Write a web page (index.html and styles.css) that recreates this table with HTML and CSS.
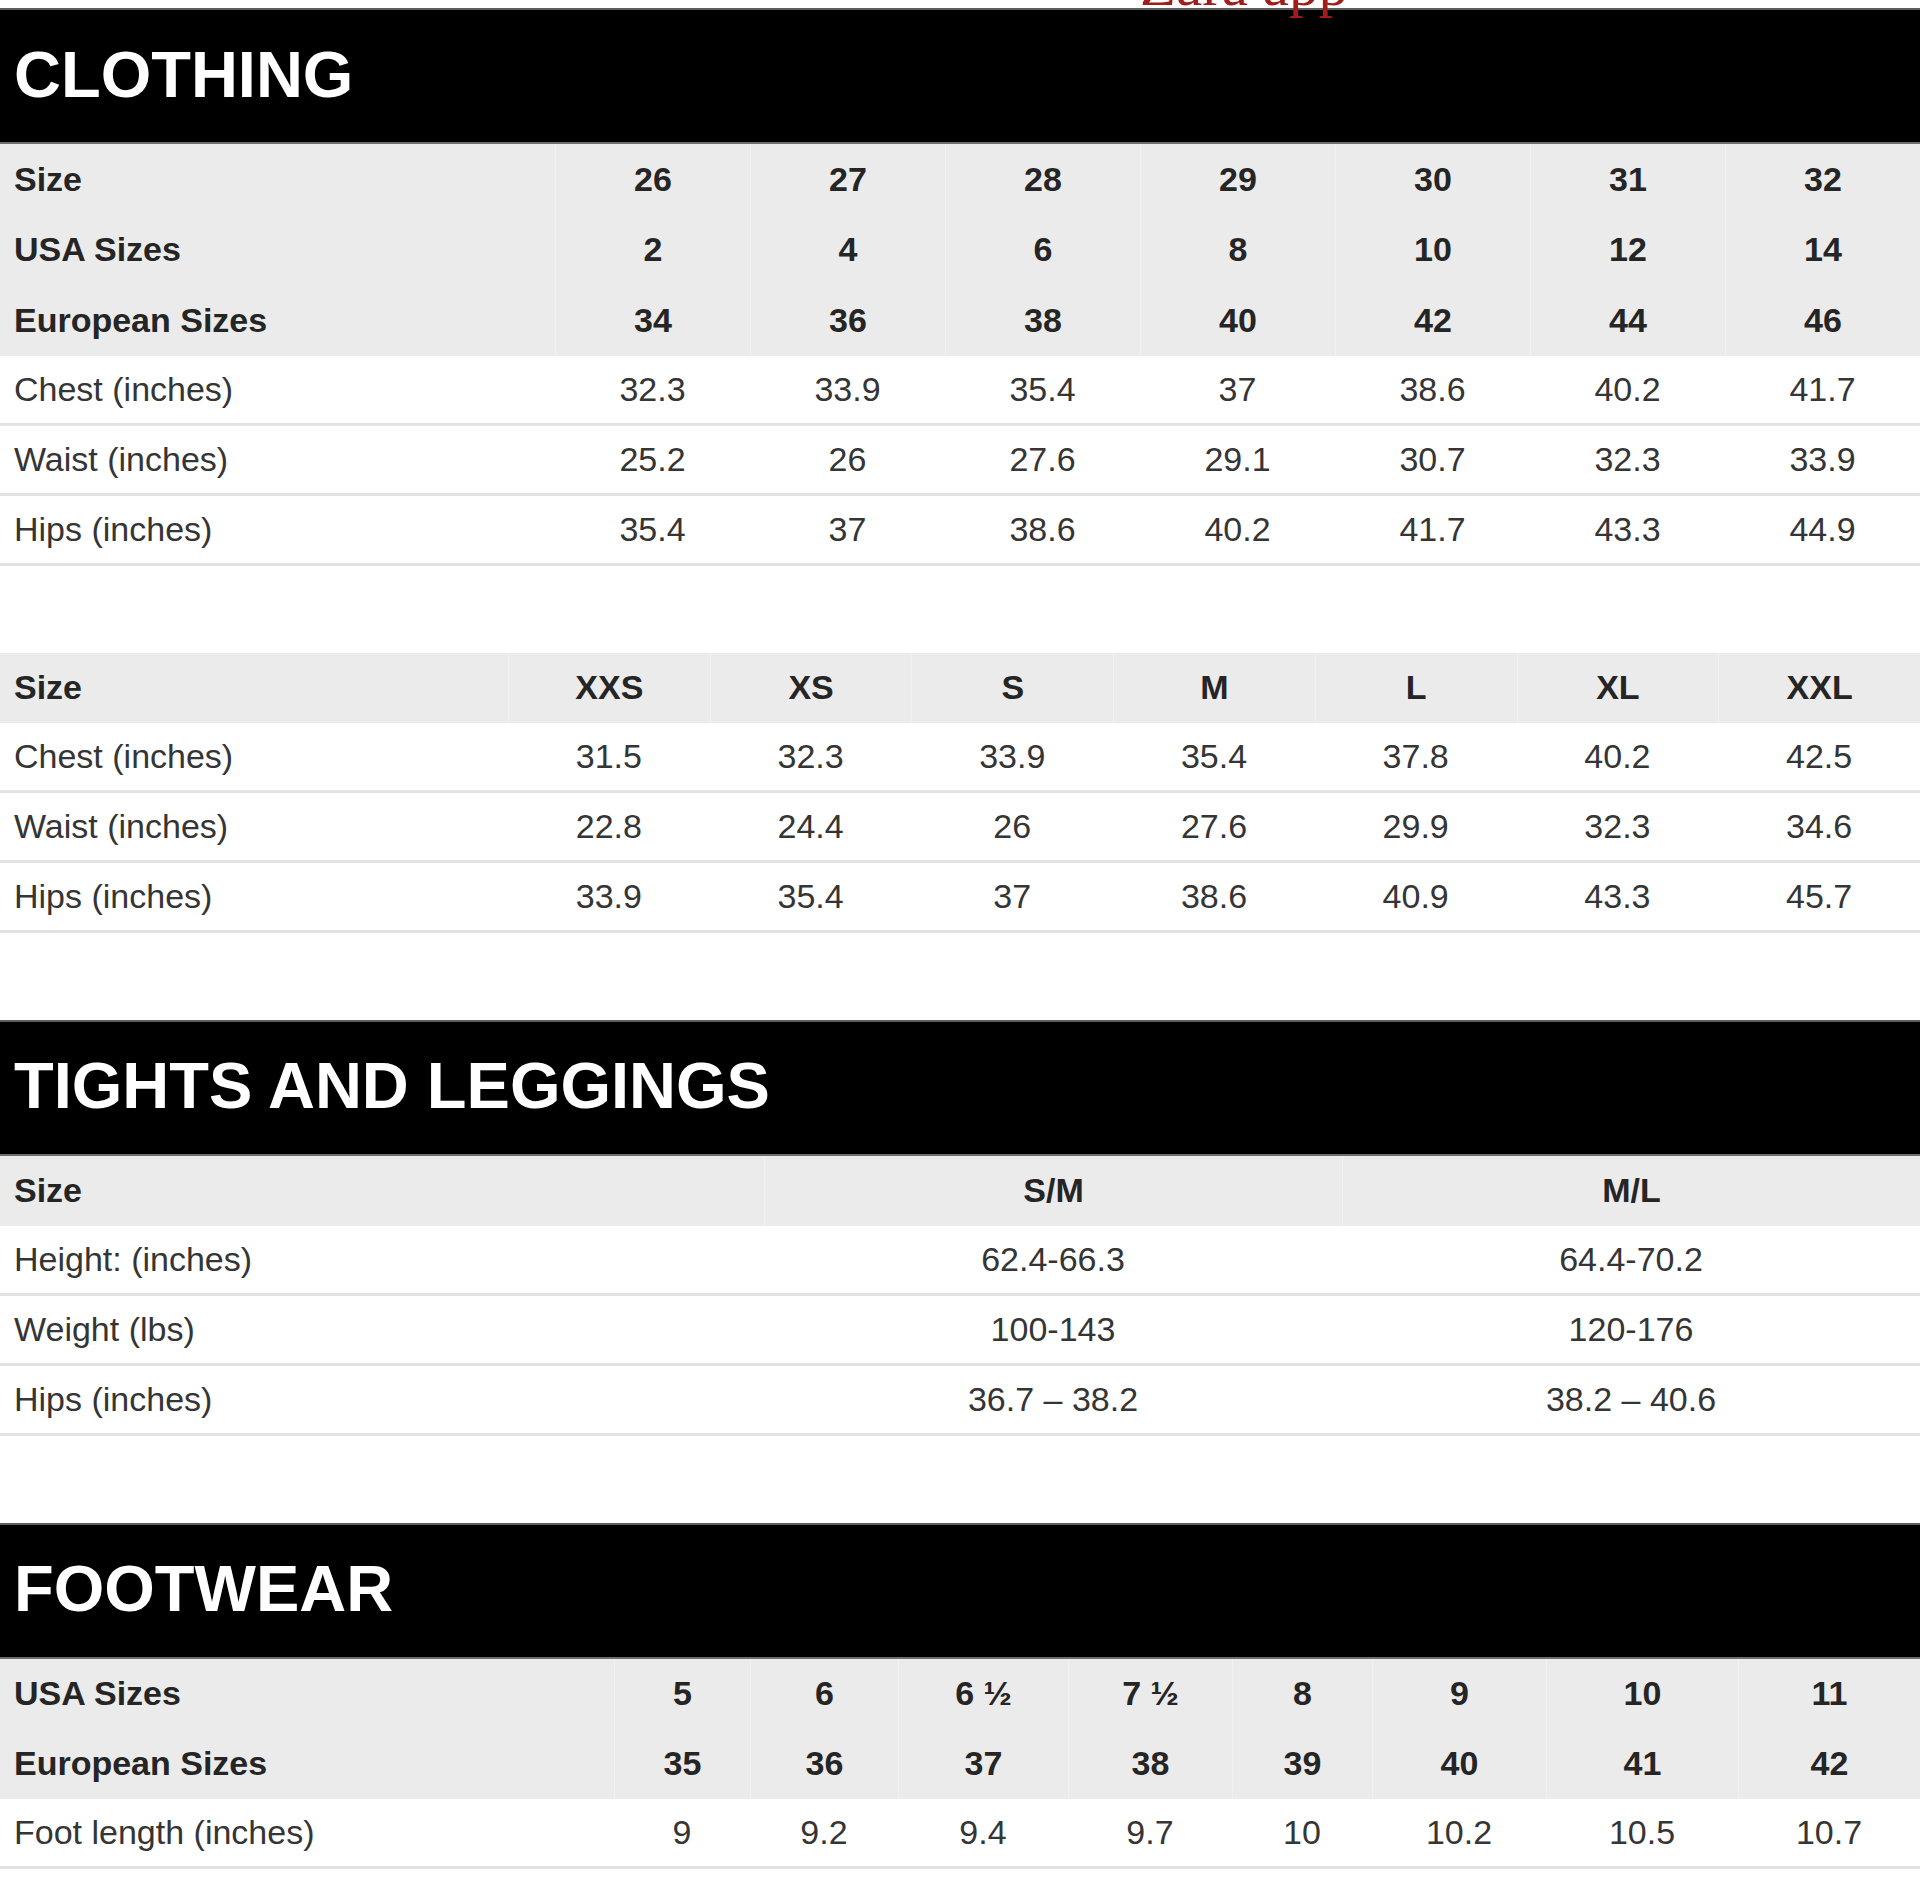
FILE: index.html
```html
<!DOCTYPE html>
<html lang="en">
<head>
<meta charset="utf-8">
<title>Size Guide</title>
<link rel="stylesheet" href="styles.css">
</head>
<body>
<div class="page">
  <div class="watermark">Zara app</div>

  <section class="chart">
    <h2 class="chart-title">CLOTHING</h2>
    <div class="table t-clothing">
      <div class="row head"><div class="cell label">Size</div><div class="cell">26</div><div class="cell">27</div><div class="cell">28</div><div class="cell">29</div><div class="cell">30</div><div class="cell">31</div><div class="cell">32</div></div>
      <div class="row head"><div class="cell label">USA Sizes</div><div class="cell">2</div><div class="cell">4</div><div class="cell">6</div><div class="cell">8</div><div class="cell">10</div><div class="cell">12</div><div class="cell">14</div></div>
      <div class="row head"><div class="cell label">European Sizes</div><div class="cell">34</div><div class="cell">36</div><div class="cell">38</div><div class="cell">40</div><div class="cell">42</div><div class="cell">44</div><div class="cell">46</div></div>
      <div class="row body"><div class="cell label">Chest (inches)</div><div class="cell">32.3</div><div class="cell">33.9</div><div class="cell">35.4</div><div class="cell">37</div><div class="cell">38.6</div><div class="cell">40.2</div><div class="cell">41.7</div></div>
      <div class="row body"><div class="cell label">Waist (inches)</div><div class="cell">25.2</div><div class="cell">26</div><div class="cell">27.6</div><div class="cell">29.1</div><div class="cell">30.7</div><div class="cell">32.3</div><div class="cell">33.9</div></div>
      <div class="row body"><div class="cell label">Hips (inches)</div><div class="cell">35.4</div><div class="cell">37</div><div class="cell">38.6</div><div class="cell">40.2</div><div class="cell">41.7</div><div class="cell">43.3</div><div class="cell">44.9</div></div>
    </div>
  </section>

  <section class="chart">
    <div class="table t-alpha">
      <div class="row head"><div class="cell label">Size</div><div class="cell">XXS</div><div class="cell">XS</div><div class="cell">S</div><div class="cell">M</div><div class="cell">L</div><div class="cell">XL</div><div class="cell">XXL</div></div>
      <div class="row body"><div class="cell label">Chest (inches)</div><div class="cell">31.5</div><div class="cell">32.3</div><div class="cell">33.9</div><div class="cell">35.4</div><div class="cell">37.8</div><div class="cell">40.2</div><div class="cell">42.5</div></div>
      <div class="row body"><div class="cell label">Waist (inches)</div><div class="cell">22.8</div><div class="cell">24.4</div><div class="cell">26</div><div class="cell">27.6</div><div class="cell">29.9</div><div class="cell">32.3</div><div class="cell">34.6</div></div>
      <div class="row body"><div class="cell label">Hips (inches)</div><div class="cell">33.9</div><div class="cell">35.4</div><div class="cell">37</div><div class="cell">38.6</div><div class="cell">40.9</div><div class="cell">43.3</div><div class="cell">45.7</div></div>
    </div>
  </section>

  <section class="chart">
    <h2 class="chart-title">TIGHTS AND LEGGINGS</h2>
    <div class="table t-tights">
      <div class="row head"><div class="cell label">Size</div><div class="cell">S/M</div><div class="cell">M/L</div></div>
      <div class="row body"><div class="cell label">Height: (inches)</div><div class="cell">62.4-66.3</div><div class="cell">64.4-70.2</div></div>
      <div class="row body"><div class="cell label">Weight (lbs)</div><div class="cell">100-143</div><div class="cell">120-176</div></div>
      <div class="row body"><div class="cell label">Hips (inches)</div><div class="cell">36.7 – 38.2</div><div class="cell">38.2 – 40.6</div></div>
    </div>
  </section>

  <section class="chart">
    <h2 class="chart-title">FOOTWEAR</h2>
    <div class="table t-shoes">
      <div class="row head"><div class="cell label">USA Sizes</div><div class="cell">5</div><div class="cell">6</div><div class="cell">6 ½</div><div class="cell">7 ½</div><div class="cell">8</div><div class="cell">9</div><div class="cell">10</div><div class="cell">11</div></div>
      <div class="row head"><div class="cell label">European Sizes</div><div class="cell">35</div><div class="cell">36</div><div class="cell">37</div><div class="cell">38</div><div class="cell">39</div><div class="cell">40</div><div class="cell">41</div><div class="cell">42</div></div>
      <div class="row body"><div class="cell label">Foot length (inches)</div><div class="cell">9</div><div class="cell">9.2</div><div class="cell">9.4</div><div class="cell">9.7</div><div class="cell">10</div><div class="cell">10.2</div><div class="cell">10.5</div><div class="cell">10.7</div></div>
    </div>
  </section>
</div>
</body>
</html>
```

FILE: styles.css
```css
* {
  box-sizing: border-box;
}

html,
body {
  margin: 0;
  padding: 0;
  background: #ffffff;
}

body {
  font-family: "Liberation Sans", Arial, Helvetica, sans-serif;
}

.page {
  position: relative;
  width: 1920px;
  padding-top: 8px;
  padding-bottom: 30px;
}

.watermark {
  position: absolute;
  left: 1140px;
  top: -44px;
  z-index: 2;
  font-family: "Liberation Serif", "Times New Roman", serif;
  font-size: 59px;
  line-height: 58px;
  color: #a21d19;
  white-space: nowrap;
}

.chart + .chart {
  margin-top: 87px;
}

.chart-title {
  margin: 0;
  height: 136px;
  display: flex;
  align-items: center;
  padding: 0 0 4px 14px;
  background: #000000;
  border-top: 2px solid #5e5e5e;
  border-bottom: 2px solid #6e6e6e;
  color: #ffffff;
  font-size: 65px;
  line-height: 65px;
  font-weight: 700;
  letter-spacing: 0;
}

.table {
  display: flex;
  flex-direction: column;
}

.row {
  display: grid;
  height: 70px;
  font-size: 34px;
}

.t-clothing .row {
  grid-template-columns: 555px repeat(7, 1fr);
}

.t-clothing .row.head {
  height: 70.67px;
}

.t-alpha .row {
  grid-template-columns: 508px repeat(7, 1fr);
}

.t-tights .row {
  grid-template-columns: 764px repeat(2, 1fr);
}

.t-shoes .row {
  grid-template-columns: 614px 136px 148px 170px 164px 140px 174px 192px 182px;
}

.row.head {
  background: #ebebeb;
  color: #252525;
  font-weight: 700;
}

.row.body {
  background: #ffffff;
  color: #353535;
  border-bottom: 3px solid #e3e3e3;
}

.cell {
  display: flex;
  align-items: center;
  justify-content: center;
  white-space: nowrap;
}

.cell.label {
  justify-content: flex-start;
  padding-left: 14px;
}

.row.head .cell + .cell {
  border-left: 1px solid #f1f1f1;
}
```
